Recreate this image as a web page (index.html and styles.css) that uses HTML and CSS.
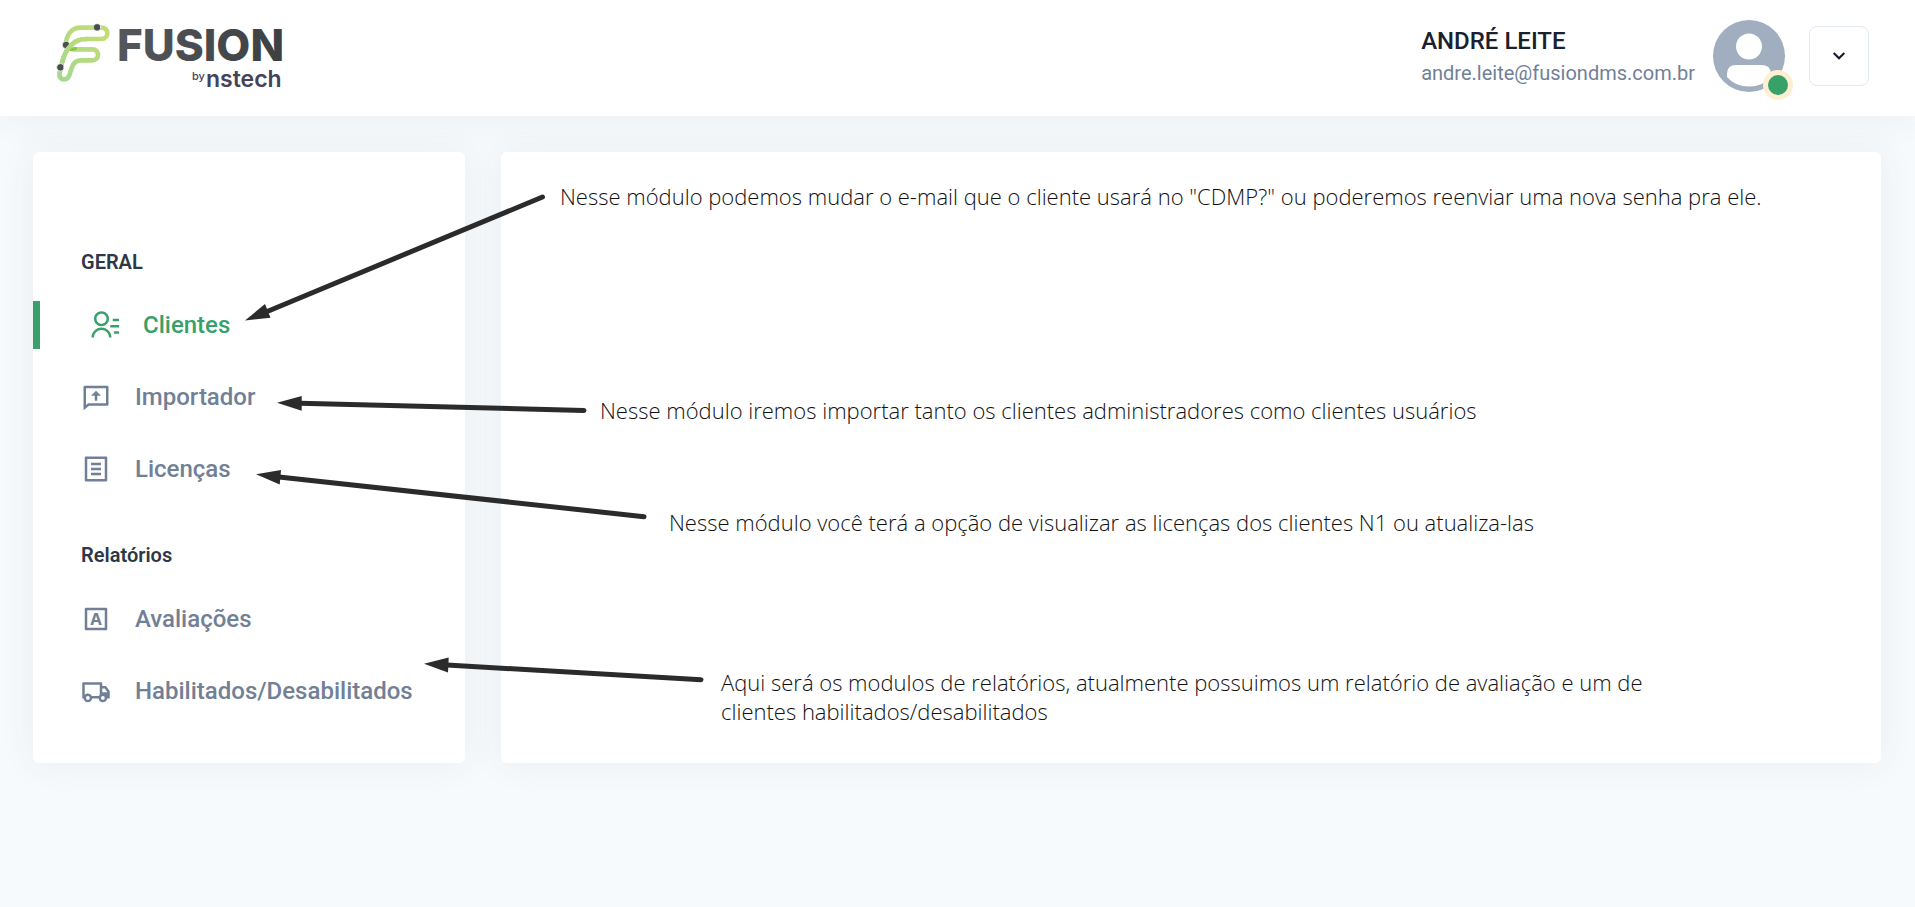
FILE: index.html
```html
<!DOCTYPE html>
<html lang="pt-BR">
<head>
<meta charset="utf-8">
<meta name="viewport" content="width=device-width, initial-scale=1">
<title>Fusion by nstech</title>
<link rel="stylesheet" href="styles.css">
</head>
<body>
<header class="topbar">
  <a class="logo" href="#" aria-label="Fusion by nstech">
    <svg width="260" height="90" viewBox="0 0 260 90">
      <defs>
        <linearGradient id="word" x1="0" x2="1"><stop offset="0" stop-color="#55575b"/><stop offset="1" stop-color="#3b4043"/></linearGradient>
        <linearGradient id="leaf" gradientUnits="userSpaceOnUse" x1="60" y1="210" x2="205" y2="50"><stop offset="0" stop-color="#a5d88f"/><stop offset="1" stop-color="#c4dd72"/></linearGradient>
      </defs>
      <g transform="scale(.3333)" fill="none" stroke="url(#leaf)" stroke-width="14" stroke-linecap="round">
        <path d="M78 103C78 76 94 53 122 53H185C208 53 208 87 184 87H140"/>
        <path d="M100 118H157C180 118 180 151 156 151H124C108 151 99 160 95 174L90 190C86 206 78 208 72 208C62 208 56 199 59 188L66 158C78 112 100 87 140 87"/>
        <path d="M93 119L106 116" stroke="#8fc63f" stroke-width="10"/>
        <g fill="#4b4d51" stroke="#fff" stroke-width="2"><circle cx="171" cy="52" r="11"/><circle cx="78" cy="105" r="11"/></g>
        <path d="M66 158C78 112 100 87 140 87"/>
        <circle cx="61" cy="172" r="11" fill="#4b4d51" stroke="#fff" stroke-width="2"/>
      </g>
      <text class="logo-name" x="77" y="51" fill="url(#word)">FUSION</text>
      <text class="logo-by" x="152" y="70">by</text>
      <text class="logo-brand" x="166" y="77">nstech</text>
    </svg>
  </a>
  <div class="account">
    <div class="account-text">
      <strong class="account-name">ANDRÉ LEITE</strong>
      <span class="account-mail">andre.leite@fusiondms.com.br</span>
    </div>
    <div class="avatar">
      <svg width="72" height="72" viewBox="0 0 72 72" aria-hidden="true">
        <circle cx="36" cy="36" r="36" fill="#a0aec0"/>
        <circle cx="36" cy="26.500" r="13" fill="#fff"/>
        <path d="M23 45H48Q58 45 58 54V57Q50 66.500 36 66.500T14 57V54Q14 45 23 45Z" fill="#fff"/>
      </svg>
      <span class="status"></span>
    </div>
    <button class="menu-button" type="button" aria-label="Abrir menu">
      <svg width="12" height="8" viewBox="0 0 12 8" fill="none" stroke="#111827" stroke-width="2"><path d="M.7 1L6 6.300L11.300 1"/></svg>
    </button>
  </div>
</header>

<div class="workspace">
  <nav class="card sidebar">
    <h2 class="group-title">GERAL</h2>
    <ul class="menu">
      <li><a class="item active" href="#"><svg class="icon" viewBox="0 0 24 24"><path d="M19 7H24V9H19V7ZM17 12H24V14H17V12ZM20 17H24V19H20V17ZM2 22C2 17.582 5.582 14 10 14S18 17.582 18 22H16C16 18.686 13.314 16 10 16S4 18.686 4 22H2ZM10 13C6.685 13 4 10.315 4 7S6.685 1 10 1S16 3.685 16 7S13.315 13 10 13ZM10 11C12.210 11 14 9.210 14 7S12.210 3 10 3S6 4.790 6 7S7.790 11 10 11Z"/></svg>Clientes</a></li>
      <li><a class="item" href="#"><svg class="icon" viewBox="0 0 24 24"><path d="M6.455 19L2 22.500V4C2 3.448 2.448 3 3 3H21C21.552 3 22 3.448 22 4V18C22 18.552 21.552 19 21 19H6.455ZM4 18.385L5.763 17H20V5H4V18.385ZM13 11V15H11V11H8L12 7L16 11H13Z"/></svg>Importador</a></li>
      <li><a class="item" href="#"><svg class="icon" viewBox="0 0 24 24"><path d="M20 22H4C3.448 22 3 21.552 3 21V3C3 2.448 3.448 2 4 2H20C20.552 2 21 2.448 21 3V21C21 21.552 20.552 22 20 22ZM19 20V4H5V20H19ZM8 7H16V9H8V7ZM8 11H16V13H8V11ZM8 15H16V17H8V15Z"/></svg>Licenças</a></li>
    </ul>
    <h2 class="group-title">Relatórios</h2>
    <ul class="menu">
      <li><a class="item" href="#"><svg class="icon" viewBox="0 0 24 24" aria-hidden="true"><path d="M4 3H20C20.552 3 21 3.448 21 4V20C21 20.552 20.552 21 20 21H4C3.448 21 3 20.552 3 20V4C3 3.448 3.448 3 4 3ZM5 5V19H19V5H5Z"/><text class="icon-letter" x="12" y="17" text-anchor="middle">A</text></svg>Avaliações</a></li>
      <li><a class="item" href="#"><svg class="icon" viewBox="0 0 24 24"><path d="M8.965 18C8.722 19.696 7.263 21 5.500 21S2.278 19.696 2.035 18H1V6C1 5.448 1.448 5 2 5H16C16.552 5 17 5.448 17 6V8H20L23 12.056V18H20.965C20.722 19.696 19.263 21 17.500 21S14.278 19.696 14.035 18H8.965ZM15 7H3V15.050C3.635 14.402 4.521 14 5.500 14C6.896 14 8.101 14.818 8.663 16H14.337C14.505 15.647 14.730 15.326 15 15.050V7ZM17 13H21V12.715L18.992 10H17V13ZM17.500 19A1.500 1.500 0 1 0 17.500 16A1.500 1.500 0 0 0 17.500 19ZM5.500 19A1.500 1.500 0 1 0 5.500 16A1.500 1.500 0 0 0 5.500 19Z"/></svg>Habilitados/Desabilitados</a></li>
    </ul>
  </nav>

  <main class="card notes">
    <p class="note note-clients">Nesse módulo podemos mudar o e-mail que o cliente usará no "CDMP?" ou poderemos reenviar uma nova senha pra ele.</p>
    <p class="note note-import">Nesse módulo iremos importar tanto os clientes administradores como clientes usuários</p>
    <p class="note note-license">Nesse módulo você terá a opção de visualizar as licenças dos clientes N1 ou atualiza-las</p>
    <p class="note note-reports">Aqui será os modulos de relatórios, atualmente possuimos um relatório de avaliação e um de<br>clientes habilitados/desabilitados</p>
  </main>

  <svg class="arrows" width="720" height="611" viewBox="33 152 720 611" aria-hidden="true">
    <g stroke="#2b2b2b" stroke-width="5" stroke-linecap="round">
      <path d="M542.500 197L266 312"/><path d="M584 410.500L300 403.300"/><path d="M644 516.700L279 477"/><path d="M701 679.700L447 665"/>
    </g>
    <g fill="#2b2b2b">
      <path d="M245 320.500L265 304L270.500 317.800Z"/><path d="M277 402.700L301.700 396V410.700Z"/><path d="M256 474.300L281 470L279.700 484.500Z"/><path d="M424 663.700L448.700 657.500L448 672.500Z"/>
    </g>
  </svg>
</div>
</body>
</html>
```
FILE: styles.css
```css
* { box-sizing: border-box; }

body {
  margin: 0;
  min-height: 100vh;
  background: #f7fafc;
  color: #2d3748;
  font-family: Roboto, "Liberation Sans", sans-serif;
}

.topbar {
  display: flex;
  align-items: center;
  justify-content: space-between;
  padding: 10px 46px 16px 40px;
  background: #fff;
  box-shadow: 0 0 36px rgba(45, 75, 95, .07);
}

.logo, .logo svg { display: block; }
.logo-name { font: 800 44px Inter, sans-serif; }
.logo-by { font: 500 11px Inter, sans-serif; fill: #45425a; }
.logo-brand { font: 600 23px Inter, sans-serif; fill: #45425a; }

.account { display: flex; align-items: center; padding-top: 2px; }
.account-text { display: flex; flex-direction: column; padding-top: 2px; }
.account-name { font-size: 24px; line-height: 32px; font-weight: 500; color: #1a202c; }
.account-mail { font-size: 20px; line-height: 32px; color: #718096; }

.avatar { position: relative; height: 72px; margin: 0 24px 0 18px; }
.status {
  position: absolute;
  right: -8px;
  bottom: -8px;
  width: 30px;
  height: 30px;
  border: 5px solid #feefd2;
  border-radius: 50%;
  background: #38a169;
}

.menu-button {
  display: grid;
  place-items: center;
  width: 60px;
  height: 60px;
  border: 1px solid #e2e8f0;
  border-radius: 8px;
  background: #fff;
}

.workspace {
  position: relative;
  display: grid;
  grid-template-columns: 432px 1fr;
  gap: 36px;
  padding: 36px 34px 36px 33px;
}

.card {
  border-radius: 6px;
  background: #fff;
  box-shadow: 0 0 36px rgba(45, 75, 95, .07);
}

.sidebar { padding: 98px 0 48px; }
.group-title {
  margin: 0 48px 27px;
  font-size: 20px;
  line-height: 24px;
  font-weight: 600;
}
.menu {
  display: grid;
  gap: 24px;
  margin: 0;
  padding: 0;
  list-style: none;
}
.menu + .group-title { margin: 50px 48px 28px; }
.item {
  display: flex;
  align-items: center;
  gap: 24px;
  height: 48px;
  padding-left: 48px;
  color: #718096;
  font-size: 24px;
  font-weight: 500;
  text-decoration: none;
}
.item.active { padding-left: 56px; box-shadow: inset 7px 0 #38a169; color: #38a169; }
.icon { width: 30px; height: 30px; fill: currentColor; }
.icon-letter { font: 700 13px Inter, sans-serif; }

.notes { padding: 30px 59px; }
.note {
  margin: 0;
  color: #111;
  font: 300 22px/29px "Open Sans", "Noto Sans", sans-serif;
}
.note-import { margin: 185px 0 0 40px; }
.note-license { margin: 83px 0 0 109px; }
.note-reports { margin: 131px 0 0 161px; }

.arrows { position: absolute; top: 36px; left: 33px; pointer-events: none; }
```
